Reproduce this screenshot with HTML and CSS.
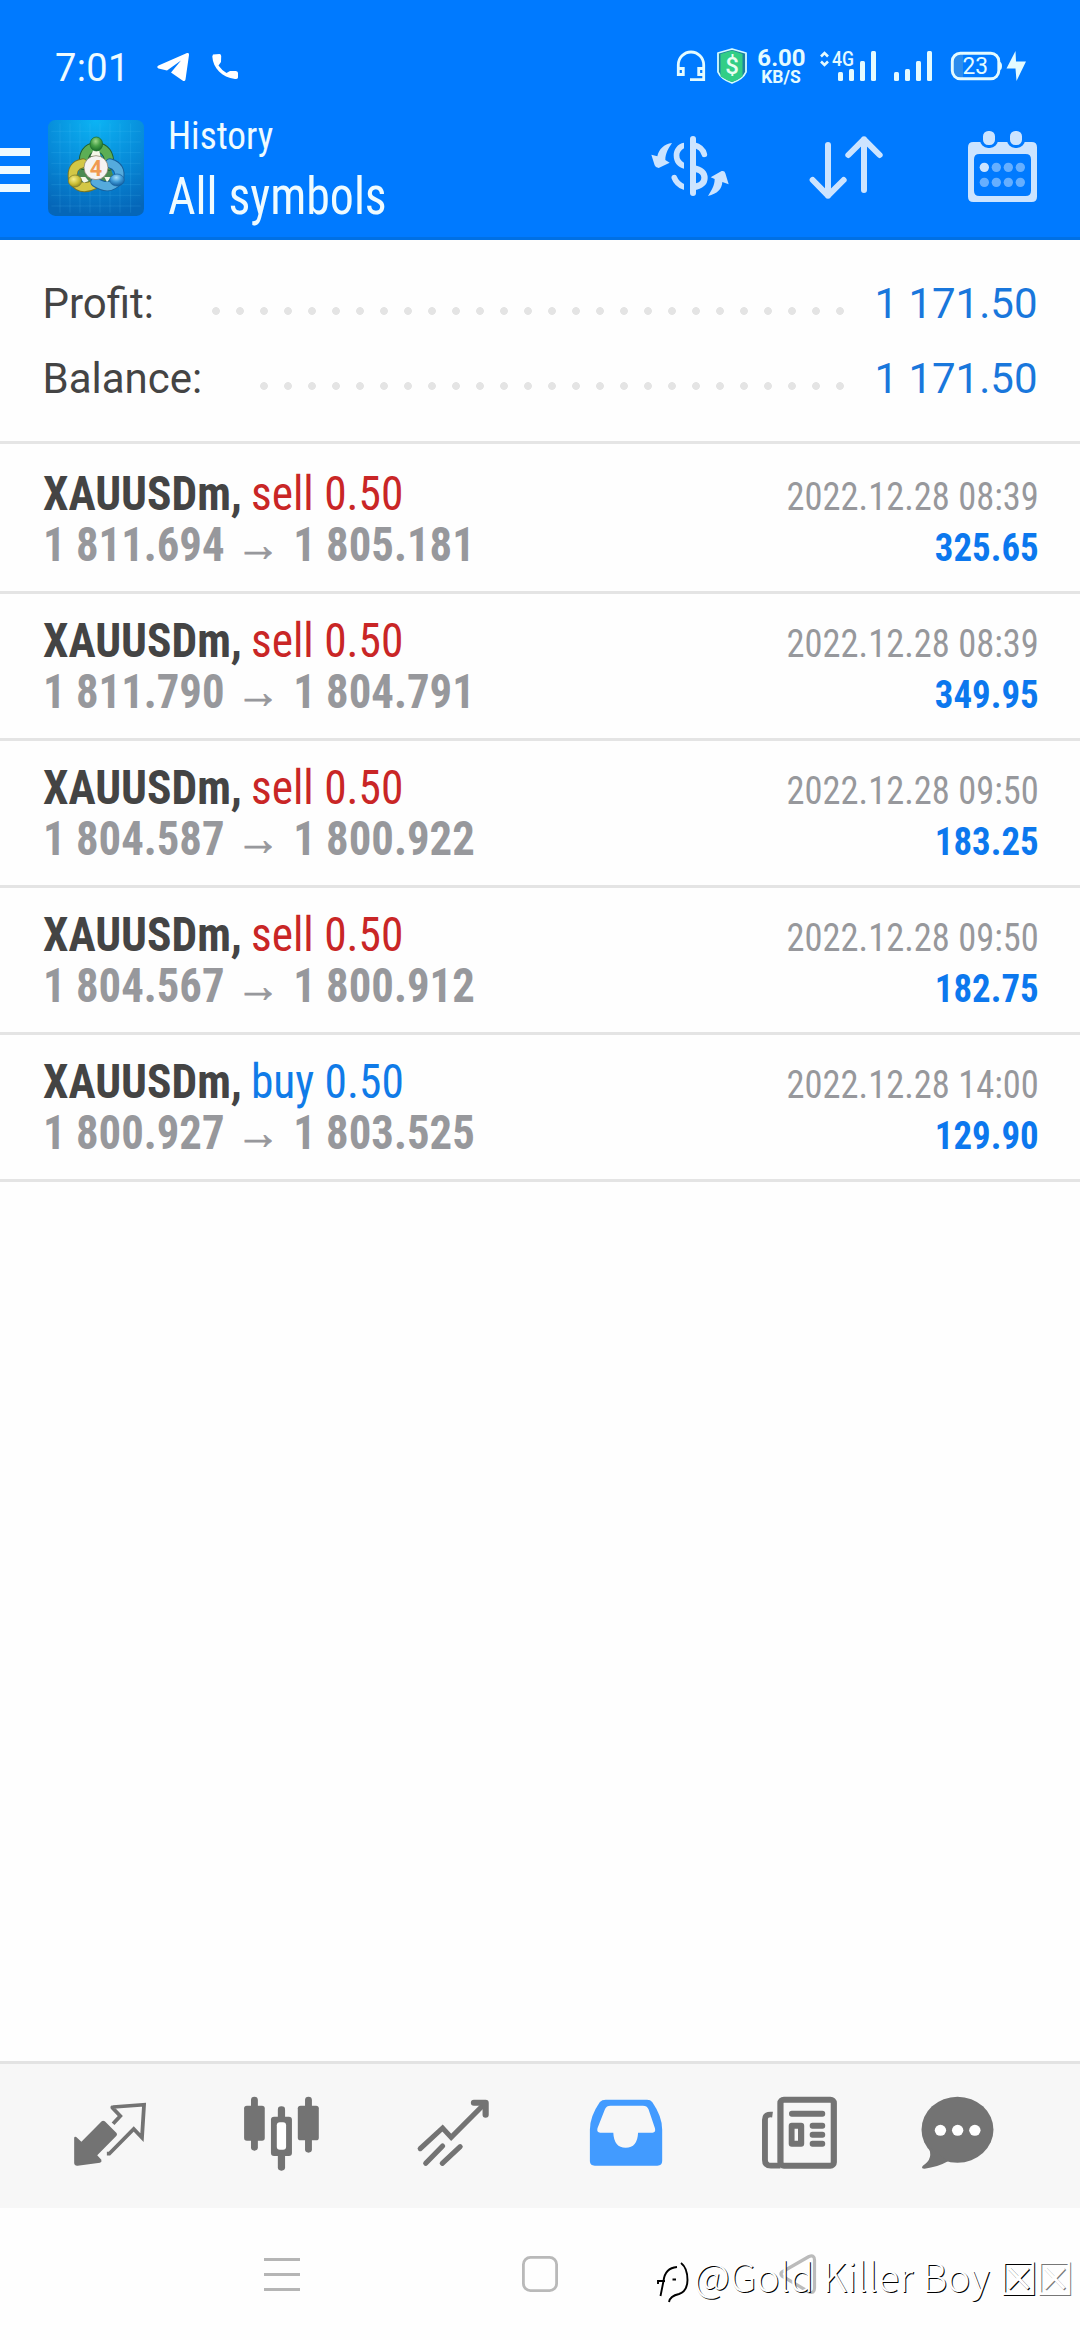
FILE: index.html
```html
<!DOCTYPE html>
<html lang="en">
<head>
<meta charset="utf-8">
<title>History</title>
<link rel="stylesheet" href="styles.css">
</head>
<body>
<div class="screen">
  <header class="header">
    <div class="status">
      <span class="clock">7:01</span>
      <svg class="status-left" width="90" height="40" viewBox="153 46 90 40" fill="#fff">
        <path d="M187 53 Q189.500 52.500 189 55 L185.500 79.500 Q185 82 182.500 80.500 L171 72.500 L181 60.500 L167 70.500 L158.500 68.500 Q156 67 158.500 65.500Z"/>
        <path d="M213 54.500 L219.500 54 Q221 54 221.200 56 L221 62 L218.500 65.500 Q221.500 70 226.500 73 L230 71 L236 71 Q238 71.300 238 73 L238 77.500 Q237.500 79.500 235 79 C222 77.500 213 68 212.300 56.500Z"/>
      </svg>
      <div class="status-right">
        <svg width="38" height="40" viewBox="674 46 38 40" fill="none" stroke="#e4fbff" stroke-width="2.800">
          <path d="M678.300 70 V65 A12.700 13 0 0 1 703.700 65 V79.600 H690 M678.300 68.500 h5 v6 h-5z M703.700 68.500 h-5 v6 h5z"/>
        </svg>
        <svg width="40" height="40" viewBox="712 46 40 40">
          <path d="M732 49 L746 53 V72 Q743 79 732 83 Q721 79 718 72 V53Z" fill="#1d829e" stroke="#d5fbff" stroke-width="1.800" stroke-linejoin="round"/>
          <path d="M732 50.500 L742.500 54 V76.500 Q738 80 732 82 Q726 80 720.500 76.500 V54Z" fill="#32ce86"/>
          <text x="732" y="73.500" class="shield-sign">$</text>
        </svg>
        <svg width="60" height="40" viewBox="752 46 60 40" fill="#e4fbff">
          <text x="781.500" y="66" class="speed">6.00</text>
          <text x="781" y="83" class="unit">KB/S</text>
        </svg>
        <svg width="68" height="40" viewBox="812 46 68 40" fill="#e4fbff">
          <path d="M821 56.500 L824.500 53 L828 56.500 M821 61.500 L824.500 65 L828 61.500" fill="none" stroke="#e4fbff" stroke-width="2.600"/>
          <text x="832" y="66" textLength="22" lengthAdjust="spacingAndGlyphs" class="net">4G</text>
          <rect x="838" y="72" width="5" height="9" rx="1.500"/><rect x="849" y="69" width="5" height="12" rx="1.500"/><rect x="860" y="61" width="5" height="20" rx="1.500"/><rect x="871" y="51" width="5" height="30" rx="1.500"/>
        </svg>
        <svg width="60" height="40" viewBox="880 46 60 40" fill="#e4fbff">
          <rect x="894" y="72" width="5" height="9" rx="1.500"/><rect x="905" y="69" width="5" height="12" rx="1.500"/><rect x="916" y="61" width="5" height="20" rx="1.500"/><rect x="927" y="51" width="5" height="30" rx="1.500"/>
        </svg>
        <svg width="90" height="40" viewBox="940 46 90 40" fill="#e4fbff">
          <path d="M963 54 H960 Q953 54 953 61 V71 Q953 78 960 78 H963Z" fill="#2c8cec"/>
          <rect x="952.300" y="53.300" width="46.500" height="25.500" rx="8" fill="none" stroke="#e4fbff" stroke-width="2.900"/>
          <path d="M999 61.500 Q1002 62 1002 66 Q1002 70 999 70.500Z"/>
          <text x="962.500" y="73.500" textLength="25.500" lengthAdjust="spacingAndGlyphs" class="battery">23</text>
          <path d="M1015.500 51 L1006.500 68.500 H1015.500 L1016.500 81 L1026 61.500 H1016Z"/>
        </svg>
      </div>
    </div>
    <div class="toolbar">
      <div class="menu"><i></i><i></i><i></i></div>
      <svg class="logo" width="96" height="96" viewBox="0 0 288 288">
        <defs>
          <radialGradient id="sky" cx=".5" cy="0" r="1"><stop offset="0" stop-color="#0cb4f4"/><stop offset=".55" stop-color="#078ad8"/><stop offset="1" stop-color="#0566b8"/></radialGradient>
          <radialGradient id="green" cx=".45" cy=".3" r=".7"><stop offset="0" stop-color="#9fd98c"/><stop offset=".5" stop-color="#46a147"/><stop offset="1" stop-color="#1a6d2b"/></radialGradient>
          <radialGradient id="gold" cx=".4" cy=".35" r=".7"><stop offset="0" stop-color="#f7ee8c"/><stop offset=".6" stop-color="#c9bd34"/><stop offset="1" stop-color="#8b8322"/></radialGradient>
          <radialGradient id="blue" cx=".45" cy=".3" r=".7"><stop offset="0" stop-color="#a9e0fa"/><stop offset=".5" stop-color="#419cd8"/><stop offset="1" stop-color="#125c9e"/></radialGradient>
        </defs>
        <rect width="288" height="288" rx="22" fill="url(#sky)"/>
        <path d="M36 10V278M66 10V278M96 10V278M126 10V278M156 10V278M186 10V278M216 10V278M248 10V278M10 34H278M10 66H278M10 98H278M10 130H278M10 162H278M10 194H278M10 226H278M10 258H278" stroke="#5ccbfa" stroke-opacity=".23" stroke-width="2"/>
        <path d="M144 85 L190 150 L200 180 L144 195 L85 180 L100 130Z" fill="#4a8a52"/>
        <g fill="none" stroke-linecap="round">
          <path d="M107 135 Q104 86 144 80 Q186 86 184 137" stroke="#205f31" stroke-width="30"/>
          <path d="M107 135 Q104 86 144 80 Q186 86 184 137" stroke="#5cae55" stroke-width="24"/>
          <path d="M104 130 Q68 136 75 180 Q97 214 138 194" stroke="#777525" stroke-width="30"/>
          <path d="M104 130 Q68 136 75 180 Q97 214 138 194" stroke="#d3c746" stroke-width="24"/>
          <path d="M186 130 Q221 140 213 178 Q185 215 142 186" stroke="#17609c" stroke-width="30"/>
          <path d="M186 130 Q221 140 213 178 Q185 215 142 186" stroke="#55abdd" stroke-width="24"/>
        </g>
        <path d="M136 90 L154 93 L158 111 L128 108Z M93 171 L112 171 L122 183 L108 188Z M169 171 L190 171 L177 186Z" fill="#f5f7e8"/>
        <ellipse cx="145" cy="72" rx="19" ry="21" fill="url(#green)" stroke="#18692b" stroke-width="2"/>
        <ellipse cx="81" cy="183" rx="20" ry="18" fill="url(#gold)" stroke="#77762a" stroke-width="2"/>
        <ellipse cx="207" cy="180" rx="22" ry="18" fill="url(#blue)" stroke="#175f9c" stroke-width="2"/>
        <circle cx="144" cy="143" r="36" fill="#f5f3f2" stroke="#7d745a" stroke-width="2"/>
        <text x="144" y="167" class="logo-number">4</text>
      </svg>
      <div class="titles">
        <div class="title">History</div>
        <div class="subtitle">All symbols</div>
      </div>
      <div class="actions">
        <svg width="90" height="80" viewBox="0 330 270 240" fill="#cce4ff">
          <path d="M96 369 C72 372 56 388 52 409 L34 404 L44 436 Q47 444 56 444 L89 428 L76 420 C76 400 86 384 96 369Z"/>
          <path d="M204 528 C232 521 246 507 247 486 L266 493 L256 460 Q254 451 245 453 L212 472 L224 477 C224 497 214 512 204 528Z"/>
          <rect x="150" y="348" width="18" height="180" rx="9"/>
          <path d="M132 368 C113 371 101 388 101 406 C101 428 114 443 132 446 V428 Q118 421 118 406 Q118 394 132 385Z"/>
          <path d="M103 473 Q110 492 132 501 M160 374 Q188 381 193 403" fill="none" stroke="#cce4ff" stroke-width="17" stroke-linecap="round"/>
          <rect x="132" y="480" width="18" height="40" fill="#007aff"/>
          <path fill-rule="evenodd" d="M160 435 Q203 443 203 474 Q203 504 160 511Z M168 457 V490 Q184 486 184 473 Q184 461 168 457Z"/>
        </svg>
        <svg width="90" height="80" viewBox="480 330 270 240" fill="none" stroke="#cce4ff" stroke-width="18" stroke-linecap="round" stroke-linejoin="round">
          <path d="M564 375 V527 M518 480 L564 527 L611 480 M672 510 V358 M625 405 L672 358 L719 405"/>
        </svg>
        <svg width="90" height="80" viewBox="960 330 270 240">
          <path fill="#cce4ff" fill-rule="evenodd" d="M1000 366 H1175 Q1191 366 1191 382 V530 Q1191 546 1175 546 H1000 Q984 546 984 530 V382 Q984 366 1000 366Z M1018 402 Q1002 402 1002 418 V512 Q1002 528 1018 528 H1157 Q1173 528 1173 512 V418 Q1173 402 1157 402Z"/>
          <g fill="#cce4ff" stroke="#007aff" stroke-width="9"><rect x="1024.500" y="328.500" width="45" height="51" rx="20"/><rect x="1105.500" y="328.500" width="45" height="51" rx="20"/></g>
          <g fill="#66afff"><circle cx="1033" cy="442" r="14" fill="#cce4ff"/><circle cx="1069" cy="442" r="14"/><circle cx="1105" cy="442" r="14"/><circle cx="1141" cy="442" r="14"/><circle cx="1033" cy="487" r="14"/><circle cx="1069" cy="487" r="14"/><circle cx="1105" cy="487" r="14"/><circle cx="1141" cy="487" r="14"/></g>
        </svg>
      </div>
    </div>
  </header>

  <section class="summary">
    <div class="total"><span>Profit:</span><i class="dots"></i><span class="total-value">1 171.50</span></div>
    <div class="total"><span>Balance:</span><i class="dots"></i><span class="total-value">1 171.50</span></div>
  </section>

  <main class="deals">
    <article class="deal">
      <div class="deal-left"><div class="deal-name"><b>XAUUSDm,</b> <span class="sell">sell 0.50</span></div><div class="prices">1 811.694 <span class="arrow">→</span> 1 805.181</div></div>
      <div class="deal-right"><div class="date">2022.12.28 08:39</div><div class="amount">325.65</div></div>
    </article>
    <article class="deal">
      <div class="deal-left"><div class="deal-name"><b>XAUUSDm,</b> <span class="sell">sell 0.50</span></div><div class="prices">1 811.790 <span class="arrow">→</span> 1 804.791</div></div>
      <div class="deal-right"><div class="date">2022.12.28 08:39</div><div class="amount">349.95</div></div>
    </article>
    <article class="deal">
      <div class="deal-left"><div class="deal-name"><b>XAUUSDm,</b> <span class="sell">sell 0.50</span></div><div class="prices">1 804.587 <span class="arrow">→</span> 1 800.922</div></div>
      <div class="deal-right"><div class="date">2022.12.28 09:50</div><div class="amount">183.25</div></div>
    </article>
    <article class="deal">
      <div class="deal-left"><div class="deal-name"><b>XAUUSDm,</b> <span class="sell">sell 0.50</span></div><div class="prices">1 804.567 <span class="arrow">→</span> 1 800.912</div></div>
      <div class="deal-right"><div class="date">2022.12.28 09:50</div><div class="amount">182.75</div></div>
    </article>
    <article class="deal">
      <div class="deal-left"><div class="deal-name"><b>XAUUSDm,</b> <span class="buy">buy 0.50</span></div><div class="prices">1 800.927 <span class="arrow">→</span> 1 803.525</div></div>
      <div class="deal-right"><div class="date">2022.12.28 14:00</div><div class="amount">129.90</div></div>
    </article>
  </main>

  <nav class="tabs">
    <svg class="tab" viewBox="200 130 240 240" preserveAspectRatio="none">
      <path d="M215 264 Q216 259 221 262 L236 276 L295 215 Q299 211 304 215 L338 250 Q341 254 338 258 L282 317 L294 330 Q296 337 290 339 L225 348 Q216 349 215 340Z"/>
      <path d="M328 222 L349 199 L326 174 Q325 172 328 172 L418 165 L412 264 L388 238 L317 312 L310 312" fill="none" stroke="#737373" stroke-width="11"/>
    </svg>
    <svg class="tab" viewBox="700 130 240 240" preserveAspectRatio="none">
      <rect x="729" y="141" width="20" height="162" rx="10"/><rect x="709" y="168" width="60" height="105" rx="8"/>
      <rect x="886" y="141" width="20" height="168" rx="10"/><rect x="865" y="168" width="61" height="104" rx="8"/>
      <rect x="807" y="170" width="21" height="193" rx="10"/><rect x="787" y="201" width="61" height="118" rx="9"/><rect x="804" y="218" width="27" height="82" rx="9" fill="#fff"/>
    </svg>
    <svg class="tab" viewBox="1200 130 240 240" preserveAspectRatio="none">
      <path d="M1221 297 L1286 235 L1311 263 L1408 162 M1237 341 L1286 289 M1285 341 L1337 291" fill="none" stroke="#737373" stroke-width="15" stroke-linecap="round"/>
      <path d="M1377 159 H1411 V195" fill="none" stroke="#737373" stroke-width="18" stroke-linecap="round" stroke-linejoin="round"/>
    </svg>
    <svg class="tab" viewBox="131.800 130 240 240" preserveAspectRatio="none">
      <path fill="#429bff" d="M192 150 H312 Q322 150 327 157 Q356 200 356 240 V334 Q356 348 342 348 H160 Q146 348 146 334 V240 Q146 200 175 157 Q181 150 192 150Z"/>
      <path fill="#f7f7f7" d="M206 168 Q194 168 190 178 L168 236 Q165 249 176 249 H214 Q216 294 250 294 Q284 294 286 249 H328 Q338 249 335 236 L316 178 Q312 168 300 168Z"/>
    </svg>
    <svg class="tab" viewBox="631.900 130 240 240" preserveAspectRatio="none">
      <path d="M677 195 Q655 192 655 210 V331 Q655 348 672 348 H700" fill="none" stroke="#737373" stroke-width="17"/>
      <rect x="700" y="150" width="155" height="198" rx="10" fill="#f7f7f7" stroke="#737373" stroke-width="18"/>
      <rect x="725" y="183" width="105" height="18" rx="8"/><rect x="785" y="219" width="45" height="18" rx="8"/><rect x="785" y="246" width="45" height="18" rx="8"/><rect x="785" y="273" width="45" height="18" rx="8"/>
      <path fill-rule="evenodd" d="M733 219 H760 Q769 219 769 228 V282 Q769 291 760 291 H733 Q724 291 724 282 V228 Q724 219 733 219Z M741 237 V273 H751 V237Z"/>
    </svg>
    <svg class="tab tab-chat" viewBox="1093 130 240 240" preserveAspectRatio="none">
      <ellipse cx="1213.500" cy="240" rx="104.500" ry="99"/>
      <path d="M1128 290 Q1146 327 1113 348 Q1106 357 1118 357 Q1155 353 1186 335Z"/>
      <g fill="#fff"><circle cx="1164" cy="242" r="16.500"/><circle cx="1214" cy="242" r="16.500"/><circle cx="1264" cy="242" r="16.500"/></g>
    </svg>
  </nav>

  <footer class="system">
    <svg width="40" height="44" viewBox="262 2252 40 44" fill="#b5b5b5"><rect x="264" y="2258" width="36" height="3"/><rect x="264" y="2273" width="36" height="3"/><rect x="264" y="2288" width="36" height="3"/></svg>
    <svg width="40" height="44" viewBox="520 2252 40 44" fill="none" stroke="#b9b9b9" stroke-width="2.800"><rect x="523.400" y="2257.400" width="33.200" height="33.200" rx="7"/></svg>
    <svg width="40" height="44" viewBox="776 2252 40 44" fill="none" stroke="#bbb" stroke-width="3.200" stroke-linejoin="round"><path d="M780 2272 Q778 2274 780 2276 L807 2292 Q812.500 2294 812.500 2288 V2260 Q812.500 2254.500 807 2256.500Z"/></svg>
  </footer>

  <div class="watermark">
    <svg width="36" height="46" viewBox="655 2258 36 46" fill="none" stroke-linecap="butt">
      <path d="M660.500 2296 L663.500 2281 Q665 2268 677 2267 M658 2284 V2281 H665 M672.500 2279.500 H676 M681 2263 Q687.500 2268 687.500 2280 Q687.500 2291 679 2294 Q670 2296 669 2302" stroke="#000" stroke-width="1.900"/>
    </svg>
    <span class="handle">@Gold Killer Boy</span><span class="box">☒</span><span class="box pale">☒</span>
  </div>
</div>
</body>
</html>
```
FILE: styles.css
```css
* { box-sizing: border-box; }
body { margin: 0; background: #fefefe; font-family: Roboto, sans-serif; color: #444; }
svg { display: block; flex: none; overflow: visible; }
i { font-style: normal; }

.screen { position: relative; width: 1080px; height: 2340px; display: flex; flex-direction: column; overflow: hidden; }

.header { height: 240px; background: #007aff; border-bottom: 3px solid #0070e4; color: #effbff; }
.status { display: flex; padding-top: 46px; height: 106px; }
.clock { padding: 2px 0 0 55px; width: 153px; font-size: 38px; line-height: 40px; letter-spacing: .4px; }
.status-right { display: flex; margin-left: 431px; }
.status text { font-family: Roboto, sans-serif; }
.shield-sign { font-size: 24px; font-weight: 500; fill: #e8fff2; text-anchor: middle; }
.speed { font-size: 24px; font-weight: 700; text-anchor: middle; }
.unit { font-size: 17.500px; font-weight: 700; text-anchor: middle; }
.net { font-size: 20.500px; font-weight: 500; }
.battery { font-size: 23.500px; font-weight: 400; }

.toolbar { display: flex; align-items: flex-start; }
.menu { width: 30px; margin-top: 42px; display: grid; gap: 10px; }
.menu i { height: 8px; background: #effaff; }
.logo { margin: 14px 0 0 18px; }
.logo-number { font: 700 65px Roboto, sans-serif; fill: #f09a50; text-anchor: middle; }
.titles { width: 300px; margin-left: 24px; font-family: "Roboto Condensed", Roboto, sans-serif; font-weight: 440; white-space: nowrap; }
.title { font-size: 39px; line-height: 46px; margin-top: 7px; transform: scaleX(.955); transform-origin: left; }
.subtitle { font-size: 51px; line-height: 60px; margin-top: 8px; transform: scaleX(.938); transform-origin: left; }
.actions { display: flex; gap: 70px; margin: 24px 0 0 172px; }

.summary { padding: 26px 42.500px 25px; border-bottom: 3px solid #e5e5e5; height: 204px; font-size: 42px; line-height: 75px; }
.total { display: flex; align-items: flex-start; white-space: nowrap; }
.dots { flex: 1; height: 8px; margin: 41px 22px 0 50px; background: radial-gradient(circle at 12px 4px, #e4e4e4 3.500px, transparent 4.300px) 0 0 / 24px 8px round; }
.total-value { color: #1977dc; }

.deals { flex: 1; padding-top: 3px; font-family: "Roboto Condensed", Roboto, sans-serif; }
.deal { display: flex; justify-content: space-between; height: 147px; padding: 21px 41px 0 42.500px; border-bottom: 3px solid #e4e4e4; line-height: 51px; white-space: nowrap; }
.deal-left { font-size: 48px; }
.deal-name { transform: scaleX(.946); transform-origin: left; }
.deal-name span { margin-left: -1.500px; font-weight: 430; }
.sell { color: #c92626; }
.buy { color: #107be8; }
.prices { height: 51px; font-weight: 700; color: #97989c; transform: scaleX(.932); transform-origin: left; }
.arrow { margin: 0 2.500px 0 1px; -webkit-text-stroke: .7px #97989c; }
.deal-right { padding-top: 4px; text-align: right; font-size: 39px; }
.date { color: #97989c; transform: scaleX(.935); transform-origin: right; font-weight: 420; }
.amount { color: #0c78ee; font-weight: 700; transform: scaleX(.945); transform-origin: right; }

.tabs { display: flex; gap: 89.540px; height: 147px; padding: 29.300px 0 0 68.870px; background: #f7f7f7; border-top: 3px solid #e3e3e3; }
.tab { width: 82.640px; height: 80px; fill: #737373; }
.tab-chat { margin-left: -13.400px; }

.system { display: flex; gap: 218px; height: 132px; padding: 44px 0 0 262px; }

.watermark { position: absolute; left: 655px; top: 2258px; display: flex; color: #fff; font: 300 39.300px/46px "Noto Sans CJK SC", sans-serif; white-space: nowrap; text-shadow: 1px 1px 0 #000; }
.handle { margin: -6px 12px 0 3px; }
.box { width: 36px; margin: -6px 0 0 0; font-size: 43px; transform: translateX(-2.500px) scaleY(1.06); }
.pale { text-shadow: 1px 1px 0 #777; }
```
